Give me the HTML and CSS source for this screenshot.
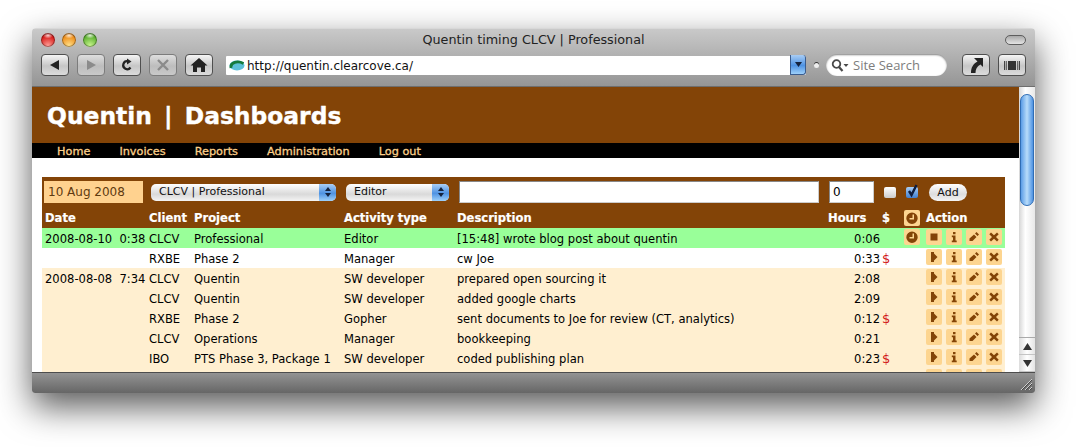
FILE: index.html
```html
<!DOCTYPE html>
<html lang="en">
<head>
    <meta charset="UTF-8">
    <title>Quentin timing CLCV | Professional</title>
    <link rel="stylesheet" href="styles.css">
</head>
<body>
    <svg class="defs" width="0" height="0">
        <symbol id="i-play" viewBox="0 0 16 16"><path d="M5 3h3v1.500l3.500 3.500-3.500 3.500v1.500H5z"/></symbol>
        <symbol id="i-stop" viewBox="0 0 16 16"><path d="M4.500 4.500h7v7h-7z"/></symbol>
        <symbol id="i-info" viewBox="0 0 16 16"><path d="M7 3h2.500v2.200H7zM5.800 6.500h3.700v5h1.200v1.700H5.800v-1.700H7V8.200H5.800z"/></symbol>
        <symbol id="i-edit" viewBox="0 0 16 16"><path d="M10.500 3l2.500 2.500-1.500 1.500L9 4.500zM8 5.500L10.500 8l-4 4H3.500v-2.500z"/></symbol>
        <symbol id="i-del" viewBox="0 0 16 16"><path d="M5 3.500L8 6.300l3-2.800 1.700 1.700L10 8l2.700 2.800-1.700 1.700-3-2.800-3 2.800-1.700-1.700L6 8 3.300 5.200z"/></symbol>
        <symbol id="i-clock" viewBox="0 0 16 16"><path fill-rule="evenodd" d="M8 2.500a5.700 5.700 0 1 1 0 11.400 5.700 5.700 0 0 1 0-11.400zM8.500 4.500h1.500v5H5.500V8h3z"/></symbol>
    </svg>

    <div class="window">
        <div class="toolbar">
            <div class="titlebar">
                <div class="lights">
                    <span class="light red"></span>
                    <span class="light amber"></span>
                    <span class="light green"></span>
                </div>
                <div class="title">Quentin timing CLCV | Professional</div>
                <span class="pill"></span>
            </div>
            <div class="navbar">
                <div class="btn"><svg width="14" height="12" viewBox="0 0 14 12"><path fill="#222" d="M11 1v10L2 6z"/></svg></div>
                <div class="btn off"><svg width="14" height="12" viewBox="0 0 14 12"><path fill="#8b8b8b" d="M3 1v10l9-5z"/></svg></div>
                <div class="btn"><svg width="14" height="14" viewBox="0 0 14 14"><path fill="none" stroke="#222" stroke-width="2.200" d="M10.500 9.500A4 4 0 1 1 8 3.300"/><path fill="#222" d="M7 .5l4.500 3L7 6.500z"/></svg></div>
                <div class="btn off"><svg width="14" height="14" viewBox="0 0 14 14"><path stroke="#8b8b8b" stroke-width="2.400" d="M2 2l10 10M12 2L2 12"/></svg></div>
                <div class="btn"><svg width="18" height="16" viewBox="0 0 18 16"><path fill="#222" d="M9 1l8.500 7.500H15V15h-4v-4.500H7V15H3V8.500H.5z"/></svg></div>
                <div class="address">
                    <svg class="favicon" width="16" height="11" viewBox="0 0 16 11"><ellipse cx="8" cy="5.500" rx="7.500" ry="5" fill="#5cc0d8"/><path fill="none" stroke="#157a3c" stroke-width="2.800" d="M2 8C1 2 9 .5 14.500 3.500"/></svg>
                    <span class="url">http://quentin.clearcove.ca/</span>
                    <span class="url-drop"><svg width="7" height="5" viewBox="0 0 7 5"><path fill="#14233f" d="M0 0h7L3.500 5z"/></svg></span>
                </div>
                <span class="snapback"></span>
                <div class="search">
                    <svg width="18" height="13" viewBox="0 0 18 13"><circle cx="5.500" cy="5" r="3.800" fill="none" stroke="#4a4a4a" stroke-width="1.800"/><path stroke="#4a4a4a" stroke-width="2.200" d="M8 8l3.500 4"/><path fill="#4a4a4a" d="M12.500 5h5L15 8z"/></svg>
                    <span>Site Search</span>
                </div>
                <div class="btn right"><svg width="16" height="17" viewBox="0 0 16 17"><path fill="#222" d="M6 1h9v9l-2.500-2.500C9 9.500 7.500 12 7.500 16H3C3 10.500 5 7 9.500 4.500z"/></svg></div>
                <div class="btn"><svg width="16" height="11" viewBox="0 0 18 12"><path fill="#333" d="M0 1h1v10H0zM2 1h1v10H2zM4.500 1h9v10h-9zM15 1h1v10h-1zM17 1h1v10h-1z"/></svg></div>
            </div>
        </div>

        <div class="viewport">
            <div class="page">
                <div class="banner">Quentin | Dashboards</div>
                <div class="menu">
                    <a>Home</a>
                    <a>Invoices</a>
                    <a>Reports</a>
                    <a>Administration</a>
                    <a>Log out</a>
                </div>
                <div class="content">
                    <form class="add-form">
                        <input class="field date" type="text" value="10 Aug 2008">
                        <div class="select project-select">CLCV | Professional<span class="arrows"></span></div>
                        <div class="select activity-select">Editor<span class="arrows"></span></div>
                        <input class="field description" type="text">
                        <input class="field hours" type="text" value="0">
                        <span class="check"></span>
                        <span class="check on"><svg width="13" height="14" viewBox="0 0 13 14"><path fill="none" stroke="#0f1d3d" stroke-width="2.400" d="M3 7l2.500 4L10.500 1"/></svg></span>
                        <span class="add-btn">Add</span>
                    </form>
                    <table class="entries">
                        <colgroup>
                            <col class="c-date"><col class="c-client"><col class="c-project"><col class="c-activity"><col class="c-desc"><col class="c-hours"><col class="c-bill"><col class="c-clock"><col class="c-action">
                        </colgroup>
                        <thead>
                            <tr>
                                <th>Date</th><th>Client</th><th>Project</th><th>Activity type</th><th>Description</th>
                                <th>Hours</th><th class="bill">$</th>
                                <th class="clock"><span class="tile"><svg><use href="#i-clock"/></svg></span></th>
                                <th>Action</th>
                            </tr>
                        </thead>
                        <tbody>
                            <tr class="running">
                                <td>2008-08-10&nbsp; 0:38</td><td>CLCV</td><td>Professional</td><td>Editor</td><td>[15:48] wrote blog post about quentin</td>
                                <td class="num">0:06</td><td class="bill"></td>
                                <td class="clock"><span class="tile"><svg><use href="#i-clock"/></svg></span></td>
                                <td class="actions"><span class="tile"><svg><use href="#i-stop"/></svg></span><span class="tile"><svg><use href="#i-info"/></svg></span><span class="tile"><svg><use href="#i-edit"/></svg></span><span class="tile"><svg><use href="#i-del"/></svg></span></td>
                            </tr>
                            <tr class="plain">
                                <td></td><td>RXBE</td><td>Phase 2</td><td>Manager</td><td>cw Joe</td>
                                <td class="num">0:33</td><td class="bill">$</td><td></td>
                                <td class="actions"><span class="tile"><svg><use href="#i-play"/></svg></span><span class="tile"><svg><use href="#i-info"/></svg></span><span class="tile"><svg><use href="#i-edit"/></svg></span><span class="tile"><svg><use href="#i-del"/></svg></span></td>
                            </tr>
                            <tr>
                                <td>2008-08-08&nbsp; 7:34</td><td>CLCV</td><td>Quentin</td><td>SW developer</td><td>prepared open sourcing it</td>
                                <td class="num">2:08</td><td class="bill"></td><td></td>
                                <td class="actions"><span class="tile"><svg><use href="#i-play"/></svg></span><span class="tile"><svg><use href="#i-info"/></svg></span><span class="tile"><svg><use href="#i-edit"/></svg></span><span class="tile"><svg><use href="#i-del"/></svg></span></td>
                            </tr>
                            <tr>
                                <td></td><td>CLCV</td><td>Quentin</td><td>SW developer</td><td>added google charts</td>
                                <td class="num">2:09</td><td class="bill"></td><td></td>
                                <td class="actions"><span class="tile"><svg><use href="#i-play"/></svg></span><span class="tile"><svg><use href="#i-info"/></svg></span><span class="tile"><svg><use href="#i-edit"/></svg></span><span class="tile"><svg><use href="#i-del"/></svg></span></td>
                            </tr>
                            <tr>
                                <td></td><td>RXBE</td><td>Phase 2</td><td>Gopher</td><td>sent documents to Joe for review (CT, analytics)</td>
                                <td class="num">0:12</td><td class="bill">$</td><td></td>
                                <td class="actions"><span class="tile"><svg><use href="#i-play"/></svg></span><span class="tile"><svg><use href="#i-info"/></svg></span><span class="tile"><svg><use href="#i-edit"/></svg></span><span class="tile"><svg><use href="#i-del"/></svg></span></td>
                            </tr>
                            <tr>
                                <td></td><td>CLCV</td><td>Operations</td><td>Manager</td><td>bookkeeping</td>
                                <td class="num">0:21</td><td class="bill"></td><td></td>
                                <td class="actions"><span class="tile"><svg><use href="#i-play"/></svg></span><span class="tile"><svg><use href="#i-info"/></svg></span><span class="tile"><svg><use href="#i-edit"/></svg></span><span class="tile"><svg><use href="#i-del"/></svg></span></td>
                            </tr>
                            <tr>
                                <td></td><td>IBO</td><td>PTS Phase 3, Package 1</td><td>SW developer</td><td>coded publishing plan</td>
                                <td class="num">0:23</td><td class="bill">$</td><td></td>
                                <td class="actions"><span class="tile"><svg><use href="#i-play"/></svg></span><span class="tile"><svg><use href="#i-info"/></svg></span><span class="tile"><svg><use href="#i-edit"/></svg></span><span class="tile"><svg><use href="#i-del"/></svg></span></td>
                            </tr>
                            <tr>
                                <td></td><td></td><td></td><td></td><td></td><td></td><td></td><td></td>
                                <td class="actions"><span class="tile"></span><span class="tile"></span><span class="tile"></span><span class="tile"></span></td>
                            </tr>
                        </tbody>
                    </table>
                </div>
            </div>
            <div class="scrollbar">
                <div class="thumb"></div>
                <div class="scroll-arrows">
                    <span class="arrow"><svg width="9" height="7" viewBox="0 0 9 7"><path fill="#333" d="M4.500 0L9 7H0z"/></svg></span>
                    <span class="arrow"><svg width="9" height="7" viewBox="0 0 9 7"><path fill="#333" d="M0 0h9L4.500 7z"/></svg></span>
                </div>
            </div>
        </div>

        <div class="statusbar">
            <svg width="12" height="12" viewBox="0 0 12 12"><path stroke="#d0d0d0" d="M12 1L1 12M12 5l-7 7M12 9l-3 3"/><path stroke="#444" d="M12 2L2 12M12 6l-6 6M12 10l-2 2"/></svg>
        </div>
    </div>
</body>
</html>
```

FILE: styles.css
```css
html, body {
    height: 100%;
    overflow: hidden;
}
body {
    margin: 0;
    padding: 28px 0 0 32px;
    box-sizing: border-box;
    background-color: #fff;
    font-family: "DejaVu Sans", Verdana, sans-serif;
    font-size: 11.55px;
    color: #000;
}
.defs {
    position: absolute;
}

/* browser window */
.window {
    width: 1003px;
    height: 365px;
    display: flex;
    flex-direction: column;
    border-radius: 4px 4px 3px 3px;
    box-shadow: 0 14px 34px rgba(0, 0, 0, 0.65);
    overflow: hidden;
}
.toolbar {
    height: 59px;
    box-sizing: border-box;
    padding: 0 9px;
    background: linear-gradient(#c9c9c9, #959595);
    border-top: 1px solid #d8d8d8;
    border-bottom: 1px solid #6e6e6e;
}
.titlebar {
    height: 21px;
    margin-bottom: 4px;
    display: grid;
    grid-template-columns: 1fr auto 1fr;
    align-items: center;
}
.lights {
    display: flex;
    gap: 7px;
}
.light {
    width: 14px;
    height: 14px;
    border-radius: 50%;
    box-shadow: inset 0 0 0 1px rgba(0, 0, 0, 0.35);
}
.red {
    background: radial-gradient(ellipse 5px 3px at 50% 18%, rgba(255, 255, 255, 0.8), transparent), radial-gradient(circle at 50% 90%, #ff9d96, #d81f1c 65%, #a01212);
}
.amber {
    background: radial-gradient(ellipse 5px 3px at 50% 18%, rgba(255, 255, 255, 0.8), transparent), radial-gradient(circle at 50% 90%, #ffe08a, #ee8f1c 65%, #b5660f);
}
.green {
    background: radial-gradient(ellipse 5px 3px at 50% 18%, rgba(255, 255, 255, 0.8), transparent), radial-gradient(circle at 50% 90%, #c8f58c, #5fb232 65%, #3c8420);
}
.title {
    font-size: 12.75px;
    color: #222;
}
.pill {
    justify-self: end;
    width: 19px;
    height: 8px;
    border: 1px solid #5e5e5e;
    border-radius: 5px;
    background: linear-gradient(#a9a9a9, #e4e4e4);
}
.navbar {
    height: 22px;
    display: flex;
    align-items: center;
    gap: 8px;
}
.btn {
    width: 28px;
    height: 22px;
    box-sizing: border-box;
    display: flex;
    align-items: center;
    justify-content: center;
    border: 1px solid #4f4f4f;
    border-radius: 4px;
    background: linear-gradient(#f5f5f5, #c6c6c6 55%, #dcdcdc);
}
.btn.off {
    border-color: #7c7c7c;
    background: linear-gradient(#dedede, #bdbdbd 55%, #c9c9c9);
}
.btn.right {
    margin-left: 7px;
}
.address {
    width: 580px;
    height: 19px;
    margin-left: 5px;
    display: flex;
    align-items: center;
    background-color: #fff;
    border-radius: 1px;
}
.favicon {
    margin: 0 2px 0 3px;
}
.url {
    flex: 1;
    font-size: 12px;
    color: #111;
    padding-top: 1px;
}
.url-drop {
    width: 16px;
    height: 20px;
    display: flex;
    align-items: center;
    justify-content: center;
    border: 1px solid #3a5c8e;
    border-width: 0 1px 1px 1px;
    border-radius: 0 3px 3px 0;
    box-sizing: border-box;
    background: linear-gradient(#a8cdf5, #4f93e3 55%, #9dd0fa);
}
.snapback {
    width: 5px;
    height: 5px;
    border-radius: 50%;
    background-color: #eee;
    box-shadow: 0 -1px 0 #333;
}
.search {
    width: 121px;
    height: 22px;
    margin-left: -1px;
    box-sizing: border-box;
    padding-left: 5px;
    display: flex;
    align-items: center;
    gap: 4px;
    border-radius: 11px;
    background-color: #fff;
    box-shadow: inset 0 1px 2px rgba(0, 0, 0, 0.5);
    color: #7d7d7d;
    font-family: "Open Sans", sans-serif;
    font-size: 13px;
}

/* page area */
.viewport {
    height: 285px;
    display: flex;
    background-color: #fff;
}
.page {
    flex: 1;
    min-width: 0;
    overflow: hidden;
}
.banner {
    height: 56px;
    box-sizing: border-box;
    padding: 14px 0 0 15px;
    background-color: #834407;
    color: #fff;
    font-size: 23.4px;
    line-height: 30px;
    font-weight: bold;
    word-spacing: 4px;
    white-space: nowrap;
    -webkit-text-stroke: 0.4px #fff;
}
.menu {
    height: 15px;
    display: flex;
    padding-left: 25px;
    background-color: #000;
    color: #fdd08a;
    font-size: 11.3px;
    line-height: 18px;
    -webkit-text-stroke: 0.3px #fdd08a;
}
.menu a {
    margin-right: 29px;
}
.content {
    padding: 19px 14px 0 10px;
}
.add-form {
    height: 30px;
    display: flex;
    align-items: center;
    background-color: #834407;
}
.field {
    height: 22px;
    box-sizing: border-box;
    margin: 0;
    padding: 0 3px;
    border: 1px solid #a77;
    border-color: #888 #ccc #ccc #888;
    background-color: #fff;
    font-family: inherit;
    font-size: 12px;
}
.date {
    width: 99px;
    margin-left: 2px;
    border-color: #ffd28f;
    background-color: #ffd28f;
    color: #5e3a10;
}
.select {
    height: 17px;
    box-sizing: border-box;
    position: relative;
    padding-left: 8px;
    border-radius: 5px;
    background: linear-gradient(#fff, #d9d9d9 60%, #f4f4f4);
    font-size: 11px;
    line-height: 16px;
    color: #111;
}
.arrows {
    position: absolute;
    top: 0;
    right: 0;
    width: 17px;
    height: 17px;
    border-radius: 0 5px 5px 0;
    background: linear-gradient(#a8cdf5, #4f93e3 55%, #9dd0fa);
}
.arrows::before,
.arrows::after {
    content: "";
    position: absolute;
    left: 6px;
    border-left: 3px solid transparent;
    border-right: 3px solid transparent;
}
.arrows::before {
    top: 3px;
    border-bottom: 4px solid #14233f;
}
.arrows::after {
    top: 9px;
    border-top: 4px solid #14233f;
}
.project-select {
    width: 185px;
    margin-left: 8px;
}
.activity-select {
    width: 103px;
    margin-left: 10px;
}
.description {
    width: 360px;
    margin-left: 10px;
}
.hours {
    width: 45px;
    margin-left: 10px;
}
.check {
    width: 12px;
    height: 11px;
    margin-left: 10px;
    display: flex;
    align-items: center;
    justify-content: center;
    border-radius: 2px;
    background: linear-gradient(#fff, #ccc);
}
.check.on {
    background: linear-gradient(#a8cdf5, #3f7fd0);
}
.check svg {
    flex: none;
    overflow: visible;
    margin-top: -3px;
}
.add-btn {
    width: 38px;
    height: 17px;
    margin-left: 11px;
    border-radius: 9px;
    background: linear-gradient(#fff, #ddd 60%, #f4f4f4);
    text-align: center;
    font-size: 11px;
    line-height: 17px;
    color: #111;
}

/* time entries */
.entries {
    width: 963px;
    table-layout: fixed;
    border-collapse: collapse;
    background-color: #ffefd0;
}
.c-date { width: 104px; }
.c-client { width: 45px; }
.c-project { width: 150px; }
.c-activity { width: 113px; }
.c-desc { width: 371px; }
.c-hours { width: 55px; }
.c-bill { width: 22px; }
.c-clock { width: 21px; }
.c-action { width: 82px; }
.entries th {
    height: 21px;
    padding: 0 0 0 3px;
    background-color: #834407;
    color: #fff;
    text-align: left;
    white-space: nowrap;
    -webkit-text-stroke: 0.2px #fff;
}
.entries td {
    height: 20px;
    box-sizing: border-box;
    padding: 2px 0 0 3px;
    white-space: nowrap;
}
.entries .num {
    text-align: right;
}
.entries td.bill {
    padding: 1px 0 0 2px;
    color: #d21818;
    font-size: 13px;
}
.entries th.bill {
    padding-left: 2px;
}
.entries th.clock {
    padding-left: 2px;
}
.entries td.clock {
    padding: 0 0 2px 2px;
}
.entries .actions {
    padding: 0 0 2px 3px;
}
.running td {
    background-color: #99ff99;
}
.plain td {
    background-color: #fff;
}
.tile {
    width: 16px;
    height: 16px;
    display: inline-block;
    vertical-align: middle;
    margin-right: 4px;
    border-radius: 2px;
    background-color: #fdd590;
}
.tile svg {
    display: block;
    width: 16px;
    height: 16px;
    fill: #834407;
}

/* scrollbar and bottom edge */
.scrollbar {
    width: 16px;
    display: flex;
    flex-direction: column;
    justify-content: space-between;
    background: linear-gradient(90deg, #d6d6d6, #fff 40%, #e8e8e8);
}
.thumb {
    height: 110px;
    margin: 7px 1px 0 1px;
    border: 1px solid #2f6db5;
    border-radius: 7px;
    background: linear-gradient(90deg, #5a9ce6, #b8dcfa 50%, #4d92e2);
}
.scroll-arrows {
    border-top: 1px solid #aaa;
}
.arrow {
    height: 16px;
    display: flex;
    align-items: center;
    justify-content: center;
    background: linear-gradient(90deg, #dcdcdc, #fff 50%, #e4e4e4);
    border-bottom: 1px solid #c4c4c4;
}
.statusbar {
    flex: 1;
    display: flex;
    align-items: flex-end;
    justify-content: flex-end;
    padding: 0 3px 3px 0;
    border-top: 1px solid #4d4d4d;
    background: linear-gradient(#939393, #666);
}
```
